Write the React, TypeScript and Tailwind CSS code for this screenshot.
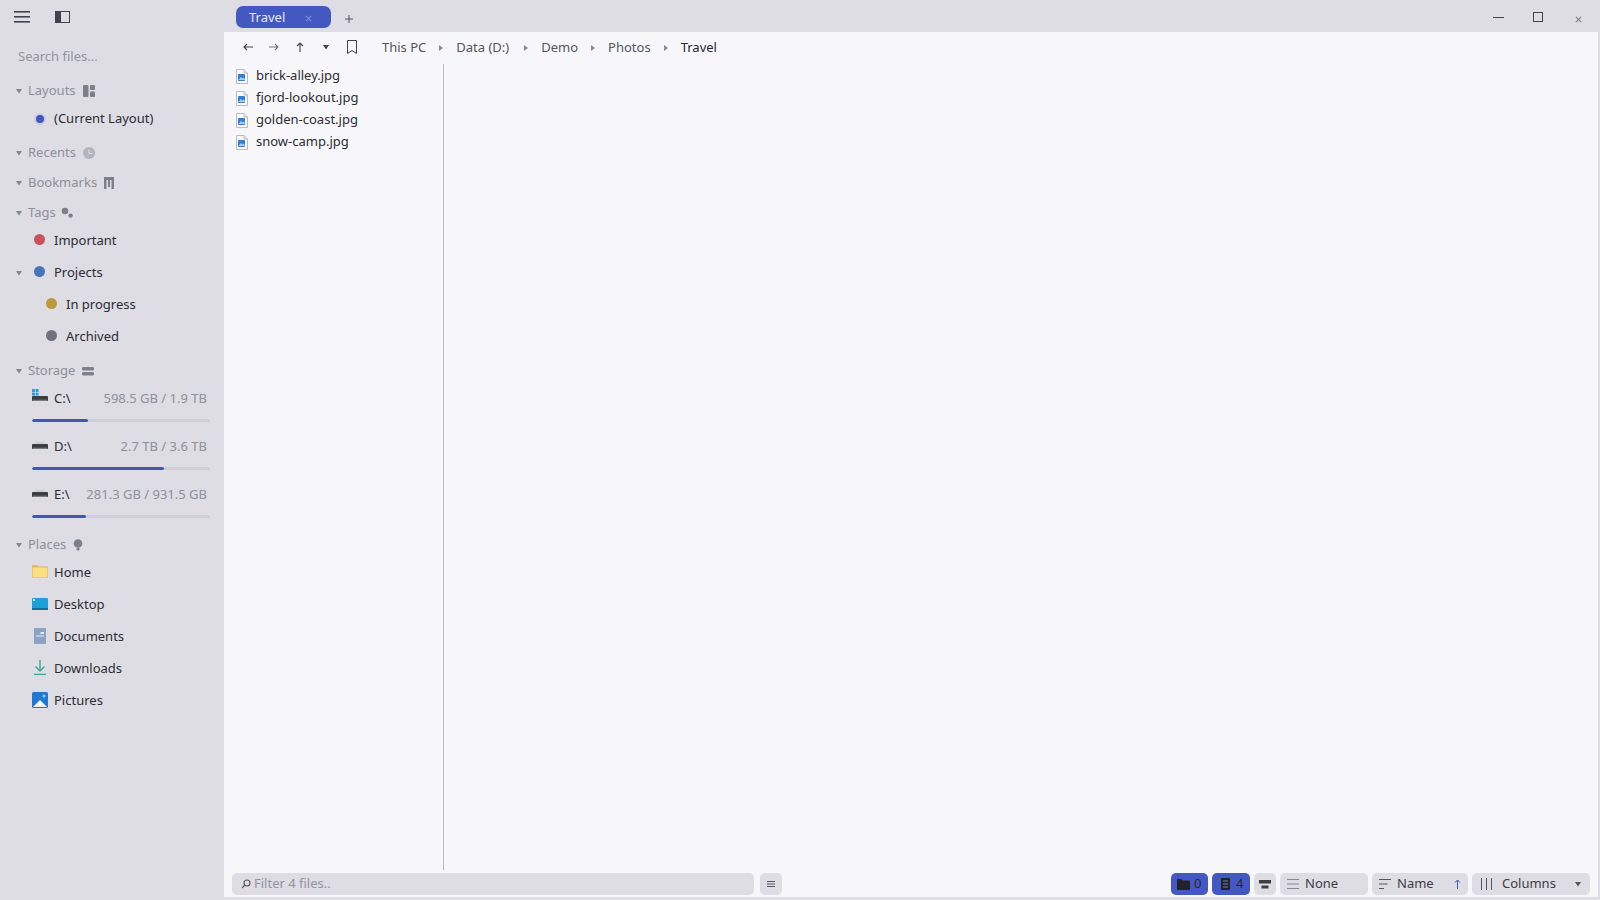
import type { ReactNode } from "react";

const FONT = "font-['Noto_Sans','Open_Sans',sans-serif]";

// small triangle used for tree carets and breadcrumb separators
function Caret({ right = false, className = "" }: { right?: boolean; className?: string }) {
  return (
    <svg viewBox="0 0 8 8" className={`w-2 h-2 ${className}`} fill="currentColor">
      {right ? <path d="M2 1l4 3-4 3z" /> : <path d="M1 2h6L4 6.5z" />}
    </svg>
  );
}

function SectionHeader({ label, icon }: { label: string; icon: ReactNode }) {
  return (
    <div className="flex items-center h-[30px] pl-[15px] text-[#8f8f99]">
      <Caret className="text-[#85858f]" />
      <span className="ml-[5px] text-[13px]">{label}</span>
      <span className="ml-[7px] flex items-center">{icon}</span>
    </div>
  );
}

function TagRow({ color, label, indent = 34, caret = false }: { color: string; label: string; indent?: number; caret?: boolean }) {
  return (
    <div className="flex items-center h-8 text-[#2c2c33] text-[13px]" style={{ paddingLeft: caret ? 15 : indent }}>
      {caret && <Caret className="text-[#85858f] mr-[11px]" />}
      <span className={`w-[11px] h-[11px] rounded-full mt-[-3px] ${color}`} />
      <span className="ml-[9px]">{label}</span>
    </div>
  );
}

function DriveIcon({ win = false }: { win?: boolean }) {
  return (
    <svg viewBox="0 0 16 16" className="w-4 h-4 mt-[-4px]">
      {win ? (
        <g fill="#2f9fdc">
          <rect x="0" y="0" width="3" height="3" />
          <rect x="3.6" y="0" width="3" height="3" />
          <rect x="0" y="3.6" width="3" height="3" />
          <rect x="3.6" y="3.6" width="3" height="3" />
        </g>
      ) : (
        <path d="M1.5 6.5C3 4.5 13 4.500 14.5 6.5z" fill="#c9cbd0" />
      )}
      <rect x="0" y="7" width="16" height="5" rx="0.8" fill="#3a3d42" />
      <rect x="1" y="10.8" width="14" height="0.9" fill="#8a9a90" />
    </svg>
  );
}

function DriveRow({ name, usage, pct, win }: { name: string; usage: string; pct: number; win?: boolean }) {
  return (
    <div className="h-12 pl-8 pr-[14px]">
      <div className="flex items-center h-[26px] text-[13px]">
        <DriveIcon win={win} />
        <span className="ml-[6px] text-[#2c2c33]">{name}</span>
        <span className="ml-auto pr-[3px] text-[#8f8f99]">{usage}</span>
      </div>
      <div className="mt-[7px] h-[3px] bg-[#cfcfd5] rounded-full overflow-hidden">
        <div className="h-full bg-[#4456b8] rounded-full" style={{ width: `${pct}%` }} />
      </div>
    </div>
  );
}

function PlaceRow({ icon, label }: { icon: ReactNode; label: string }) {
  return (
    <div className="flex items-center h-8 pl-8 text-[13px] text-[#2c2c33]">
      <span className="w-4 h-4 mt-[-3px] flex items-center justify-center">{icon}</span>
      <span className="ml-[6px]">{label}</span>
    </div>
  );
}

function FileIcon() {
  return (
    <svg viewBox="0 0 12 15" className="w-3 h-[15px] shrink-0">
      <path d="M.5.5h7.5l3.5 3.5v10.5H.5z" fill="#fbfbfd" stroke="#b9bcc6" />
      <path d="M8 .5V4h3.5" fill="#e6e7ee" stroke="#b9bcc6" />
      <rect x="2" y="5" width="7" height="7" rx="1" fill="#2f7fd6" />
      <path d="M2.5 11l2.5-3 1.5 1.5L8 8.5l1 2.5z" fill="#a7d2f5" />
    </svg>
  );
}

function Crumb({ label, active = false, last = false, className = "" }: { label: string; active?: boolean; last?: boolean; className?: string }) {
  return (
    <>
      <span className={`text-[13px] ${active ? "text-[#26262c]" : "text-[#55555e]"} ${className}`}>{label}</span>
      {!last && <Caret right className="mx-[11px] text-[#8a8a94]" />}
    </>
  );
}

function ChipBtn({ className, children }: { className: string; children: ReactNode }) {
  return <div className={`h-[22px] rounded-[5px] flex items-center text-[13px] ${className}`}>{children}</div>;
}

export default function App() {
  return (
    <div className={`w-[1600px] h-[900px] flex flex-col overflow-hidden bg-[#dddde3] ${FONT}`}>
      {/* title bar */}
      <div className="h-8 pt-[2px] flex items-center shrink-0">
        <div className="w-[236px] pl-[14px] flex items-center shrink-0">
          <svg viewBox="0 0 16 12" className="w-4 h-3 text-[#43434e]" fill="currentColor">
            <rect width="16" height="1.6" />
            <rect y="5" width="16" height="1.6" />
            <rect y="10" width="16" height="1.6" />
          </svg>
          <svg viewBox="0 0 15 12" className="ml-[25px] w-[15px] h-3">
            <rect x="0.5" y="0.5" width="14" height="11" fill="none" stroke="#43434e" />
            <rect x="0" y="0" width="6" height="12" fill="#43434e" />
          </svg>
        </div>
        <div className="w-[95px] h-[22px] rounded-[7px] bg-[#4458c2] flex items-center pl-[13px] pt-[2px] text-[13px] text-[#e4e7f7]">
          Travel
          <svg viewBox="0 0 8 8" className="ml-[20px] w-[7px] h-[7px] text-[#7d8bd6]" stroke="currentColor" strokeWidth="1.2">
            <path d="M1 1l6 6M7 1L1 7" />
          </svg>
        </div>
        <svg viewBox="0 0 8 8" className="ml-[14px] mt-[3px] w-2 h-2 text-[#55555e]" stroke="currentColor" strokeWidth="1">
          <path d="M4 0v8M0 4h8" />
        </svg>
        <div className="ml-auto flex items-center text-[#43434e]">
          <div className="w-[11px] h-px bg-[#43434e]" />
          <div className="ml-[29px] w-[10px] h-[10px] border border-[#43434e]" />
          <svg viewBox="0 0 8 8" className="ml-[32px] mr-[18px] mt-[4px] w-[7px] h-[7px] text-[#7f7f89]" stroke="currentColor" strokeWidth="1.3">
            <path d="M1 1l6 6M7 1L1 7" />
          </svg>
        </div>
      </div>

      <div className="flex-1 flex min-h-0">
        {/* sidebar */}
        <aside className="w-[224px] shrink-0 mt-[-1px]">
          <div className="h-[45px] flex items-center pl-[18px] pt-[6px] text-[13px] text-[#94949e]">Search files...</div>
          <SectionHeader
            label="Layouts"
            icon={
              <svg viewBox="0 0 12 12" className="w-3 h-3" fill="#7f7f89">
                <rect width="5.5" height="12" rx="1" />
                <rect x="7" width="5" height="5" rx="0.8" />
                <rect x="7" y="6.5" width="5" height="5.5" rx="0.8" />
              </svg>
            }
          />
          <div className="flex items-center h-[26px] pl-[36px] text-[13px] text-[#2c2c33]">
            <span className="w-2 h-2 rounded-full bg-[#4456b8] ring-2 ring-[#c9cde8]" />
            <span className="ml-[10px]">(Current Layout)</span>
          </div>
          <div className="h-[6px]" />
          <SectionHeader
            label="Recents"
            icon={
              <svg viewBox="0 0 12 12" className="w-3 h-3">
                <circle cx="6" cy="6" r="6" fill="#b4b4bc" />
                <path d="M6 2.5V6.5H9" fill="none" stroke="#e6e6ea" strokeWidth="1" />
              </svg>
            }
          />
          <SectionHeader
            label="Bookmarks"
            icon={
              <svg viewBox="0 0 10 12" className="w-[10px] h-3" fill="#7f7f89">
                <path d="M0 0h10v12H7.500V3h-5v9H0z" />
                <rect x="4" y="3" width="2" height="7" />
              </svg>
            }
          />
          <SectionHeader
            label="Tags"
            icon={
              <svg viewBox="0 0 12 12" className="w-3 h-3 -ml-[2px]" fill="#7f7f89">
                <circle cx="4" cy="4" r="3.3" />
                <circle cx="9.6" cy="8.6" r="2.2" />
              </svg>
            }
          />
          <div className="mt-[-3px]">
            <TagRow color="bg-[#c9525f]" label="Important" />
            <TagRow color="bg-[#4a74b8]" label="Projects" caret />
            <TagRow color="bg-[#bd9a38]" label="In progress" indent={46} />
            <TagRow color="bg-[#71727f]" label="Archived" indent={46} />
          </div>
          <div className="h-[3px]" />
          <SectionHeader
            label="Storage"
            icon={
              <svg viewBox="0 0 12 9" className="w-3 h-[9px]" fill="#7f7f89">
                <rect width="12" height="3.6" rx="1.4" />
                <rect y="5" width="12" height="3.6" rx="1.4" />
              </svg>
            }
          />
          <DriveRow name="C:\" usage="598.5 GB / 1.9 TB" pct={31.5} win />
          <DriveRow name="D:\" usage="2.7 TB / 3.6 TB" pct={74} />
          <DriveRow name="E:\" usage="281.3 GB / 931.5 GB" pct={30.2} />
          <SectionHeader
            label="Places"
            icon={
              <svg viewBox="0 0 10 12" className="w-[10px] h-3" fill="#7f7f89">
                <circle cx="5" cy="4.5" r="4.3" />
                <rect x="3.4" y="9" width="3.2" height="2.4" rx="0.8" />
              </svg>
            }
          />
          <div className="mt-[-3px]">
            <PlaceRow
              label="Home"
              icon={
                <svg viewBox="0 0 16 13" className="w-4 h-[13px]">
                  <path d="M0 1.2C0 .5.5 0 1.2 0h4l1.6 1.6h8c.7 0 1.2.5 1.2 1.2v9c0 .7-.5 1.2-1.2 1.2H1.2C.5 13 0 12.500 0 11.800z" fill="#e4b85a" />
                  <rect x="0.6" y="2.6" width="14.800" height="9.800" rx="0.8" fill="#fbdf83" />
                </svg>
              }
            />
            <PlaceRow
              label="Desktop"
              icon={
                <svg viewBox="0 0 16 12" className="w-4 h-3">
                  <rect width="16" height="12" rx="1" fill="#1da0da" />
                  <rect y="10" width="16" height="2" fill="#126fa8" />
                  <rect x="1" y="1" width="2" height="2" fill="#bfe8f8" />
                </svg>
              }
            />
            <PlaceRow
              label="Documents"
              icon={
                <svg viewBox="0 0 12 16" className="w-3 h-4">
                  <rect width="12" height="16" rx="1" fill="#8ba3c4" />
                  <rect x="6.500" y="4" width="3.500" height="2" fill="#e6edf6" />
                  <rect x="2" y="7.500" width="8" height="1" fill="#e6edf6" />
                </svg>
              }
            />
            <PlaceRow
              label="Downloads"
              icon={
                <svg viewBox="0 0 12 15" className="w-3 h-[15px]" fill="none" stroke="#37a594" strokeWidth="1.300">
                  <path d="M6 0v11M1.500 6.500 6 11l4.500-4.500M0 14.300h12" />
                </svg>
              }
            />
            <PlaceRow
              label="Pictures"
              icon={
                <svg viewBox="0 0 16 16" className="w-4 h-4">
                  <rect width="16" height="16" rx="1.500" fill="#2179d0" />
                  <path d="M1 15l7-7 7 7z" fill="#f3f6fb" />
                  <circle cx="12" cy="4" r="1.500" fill="#9ccbf3" />
                </svg>
              }
            />
          </div>
        </aside>

        {/* main panel */}
        <main className="flex-1 mr-[2px] mb-[3px] bg-[#f7f7fa] flex flex-col min-w-0">
          <div className="h-[30px] mb-[2px] shrink-0 flex items-center pl-[19px] text-[#43434e]">
            <svg viewBox="0 0 10 8" className="w-[10px] h-2" fill="none" stroke="currentColor" strokeWidth="1.100">
              <path d="M10 4H1M4 1 1 4l3 3" />
            </svg>
            <svg viewBox="0 0 10 8" className="ml-[16px] w-[10px] h-2 text-[#73737d]" fill="none" stroke="currentColor" strokeWidth="1.100">
              <path d="M0 4h9M6 1l3 3-3 3" />
            </svg>
            <svg viewBox="0 0 8 10" className="ml-[17px] w-2 h-[10px]" fill="none" stroke="currentColor" strokeWidth="1.100">
              <path d="M4 10V1M1 4l3-3 3 3" />
            </svg>
            <Caret className="ml-[18px] text-[#43434e]" />
            <svg viewBox="0 0 10 14" className="ml-[17px] w-[10px] h-[14px]" fill="none" stroke="currentColor">
              <path d="M.5.500h9v13L5 10.500l-4.500 3z" />
            </svg>
            <div className="ml-[25px] pt-[2px] flex items-center">
              <Crumb label="This PC" />
              <Crumb label="Data (D:)" className="pr-[2px]" />
              <Crumb label="Demo" />
              <Crumb label="Photos" />
              <Crumb label="Travel" active last />
            </div>
          </div>

          <div className="flex-1 min-h-0 flex">
            <div className="w-[220px] border-r border-[#b9b9c1] pl-[12px] mb-[3px] pt-[1px]">
              {["brick-alley.jpg", "fjord-lookout.jpg", "golden-coast.jpg", "snow-camp.jpg"].map((f) => (
                <div key={f} className="h-[22px] flex items-center text-[13px] text-[#2c2c33]">
                  <FileIcon />
                  <span className="ml-[8px]">{f}</span>
                </div>
              ))}
            </div>
          </div>

          {/* status bar */}
          <div className="h-[22px] mb-[2px] shrink-0 flex items-center pl-[8px] pr-[8px]">
            <ChipBtn className="w-[522px] bg-[#dddde3] pl-[9px] text-[#94949e]">
              <svg viewBox="0 0 10 10" className="w-[10px] h-[10px]" fill="none" stroke="#55555e" strokeWidth="1.100">
                <circle cx="6" cy="4" r="3" />
                <path d="M3.800 6.200 1 9" />
              </svg>
              <span className="ml-[3px]">Filter 4 files..</span>
            </ChipBtn>
            <ChipBtn className="ml-[6px] w-[22px] justify-center bg-[#dddde3]">
              <svg viewBox="0 0 8 6" className="w-2 h-[6px]" fill="#55555e">
                <rect width="8" height="1" />
                <rect y="2.500" width="8" height="1" />
                <rect y="5" width="8" height="1" />
              </svg>
            </ChipBtn>
            <ChipBtn className="ml-auto w-[37px] bg-[#4458c2] pl-[6px] text-[#26262c]">
              <svg viewBox="0 0 13 11" className="w-[13px] h-[11px]" fill="#22222a">
                <path d="M0 1c0-.6.4-1 1-1h3.500l1.200 1.500H12c.6 0 1 .4 1 1V10c0 .6-.4 1-1 1H1c-.6 0-1-.4-1-1z" />
              </svg>
              <span className="ml-[4px]">0</span>
            </ChipBtn>
            <ChipBtn className="ml-[4px] w-[38px] bg-[#4458c2] pl-[9px] text-[#26262c]">
              <svg viewBox="0 0 9 12" className="w-[9px] h-3">
                <rect width="9" height="12" rx="1" fill="#22222a" />
                <path d="M2 3h5M2 6h5M2 9h5" stroke="#8b97d8" strokeWidth="0.800" />
              </svg>
              <span className="ml-[6px]">4</span>
            </ChipBtn>
            <ChipBtn className="ml-[4px] w-[22px] justify-center bg-[#dddde3]">
              <svg viewBox="0 0 12 9" className="w-3 h-[9px]" fill="#3c3c45">
                <rect width="12" height="3.500" />
                <rect x="2.500" y="5.500" width="7" height="3" />
              </svg>
            </ChipBtn>
            <ChipBtn className="ml-[4px] w-[88px] bg-[#dddde3] pl-[7px] text-[#3c3c45]">
              <svg viewBox="0 0 12 10" className="w-3 h-[10px]" fill="#8a8a94">
                <rect width="12" height="1" />
                <rect y="4.500" width="12" height="1" />
                <rect y="9" width="12" height="1" />
              </svg>
              <span className="ml-[6px]">None</span>
            </ChipBtn>
            <ChipBtn className="ml-[4px] w-[96px] bg-[#dddde3] pl-[7px] text-[#3c3c45]">
              <svg viewBox="0 0 12 10" className="w-3 h-[10px]" fill="#55555e">
                <rect width="12" height="1" />
                <rect y="4.500" width="8.500" height="1" />
                <rect y="9" width="5" height="1" />
              </svg>
              <span className="ml-[6px]">Name</span>
              <svg viewBox="0 0 7 10" className="ml-auto mr-[7px] w-[7px] h-[10px]" fill="none" stroke="#4458c2" strokeWidth="1">
                <path d="M3.500 10V1M1 3.500l2.500-2.500L6 3.500" />
              </svg>
            </ChipBtn>
            <ChipBtn className="ml-[4px] w-[118px] bg-[#dddde3] pl-[9px] text-[#3c3c45]">
              <svg viewBox="0 0 11 12" className="w-[11px] h-3" fill="#55555e">
                <rect width="1" height="12" />
                <rect x="5" width="1" height="12" />
                <rect x="10" width="1" height="12" />
              </svg>
              <span className="ml-[10px]">Columns</span>
              <Caret className="ml-auto mr-[8px] text-[#55555e]" />
            </ChipBtn>
          </div>
        </main>
      </div>
    </div>
  );
}
